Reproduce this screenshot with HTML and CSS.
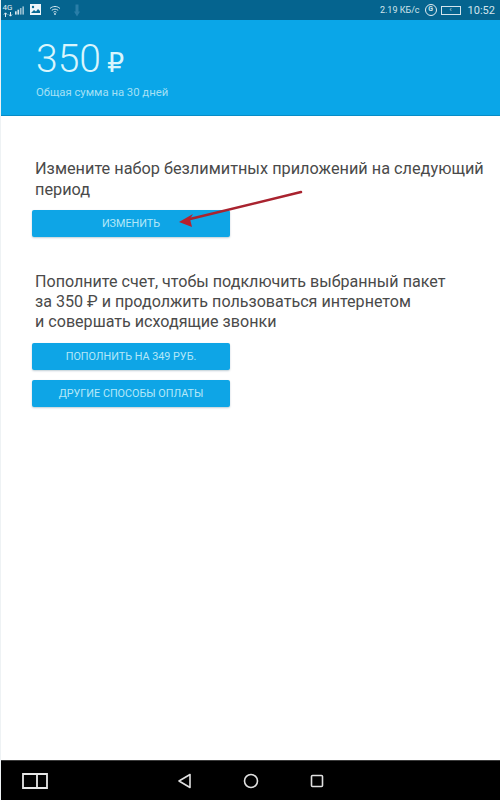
FILE: index.html
```html
<!DOCTYPE html>
<html lang="ru">
<head>
<meta charset="utf-8">
<title>Баланс</title>
<link rel="stylesheet" href="styles.css">
</head>
<body>
<div class="screen">
  <div class="status">
    <div class="status-left">
      <div class="net">
        <span class="net-label">4G</span>
        <svg class="net-arrows" viewBox="0 0 10 5"><path d="M2.500 5V1M1 2.500L2.500 .8 4 2.500M7.500 0v4M6 2.500L7.500 4.200 9 2.500" fill="none" stroke="#e3eef3" stroke-width="1"/></svg>
      </div>
      <svg class="ic-signal" viewBox="0 0 11 10"><rect x="0" y="6" width="2" height="4"/><rect x="3" y="4" width="2" height="6"/><rect x="6" y="2" width="2" height="8" opacity=".7"/><rect x="9" y="0" width="2" height="10" opacity=".7"/></svg>
      <svg class="ic-photo" viewBox="0 0 11 11"><rect width="11" height="11" fill="#eef6fa"/><circle cx="3" cy="3" r="1.2" fill="#0a6a94"/><path d="M1 9l3-3 2 1.500L8 5l2 2v2z" fill="#0a6a94"/></svg>
      <svg class="ic-wifi" viewBox="0 0 12 10"><path d="M1 3.500C4 .8 8 .8 11 3.500M2.800 5.400c2-1.700 4.400-1.700 6.400 0M4.500 7.200c1-.8 2-.8 3 0" fill="none" stroke="#d5e6ee" stroke-width="1"/><circle cx="6" cy="9" r=".9" fill="#d5e6ee"/></svg>
      <svg class="ic-down" viewBox="0 0 6 12"><path d="M1.500 0h3v7H6l-3 5-3-5h1.500z" fill="#2a7ea8"/></svg>
    </div>
    <div class="status-right">
      <span>2.19 КБ/с</span>
      <span class="ring">G</span>
      <span class="battery"><span class="bat-mark">‹</span></span>
      <span class="clock">10:52</span>
    </div>
  </div>

  <header class="head">
    <div class="sum">350<span class="rub">₽</span></div>
    <div class="sum-note">Общая сумма на 30 дней</div>
  </header>

  <main class="content">
    <section class="block block-first">
      <p class="msg">Измените набор безлимитных приложений на следующий период</p>
      <button class="btn">ИЗМЕНИТЬ</button>
    </section>
    <section class="block block-second">
      <p class="msg">Пополните счет, чтобы подключить выбранный пакет<br>за 350 ₽ и продолжить пользоваться интернетом<br>и совершать исходящие звонки</p>
      <div class="btns">
        <button class="btn">ПОПОЛНИТЬ НА 349 РУБ.</button>
        <button class="btn">ДРУГИЕ СПОСОБЫ ОПЛАТЫ</button>
      </div>
    </section>
    <svg class="arrow" viewBox="0 0 126 38"><path d="M123 2L12 29" stroke="#a9232f" stroke-width="2.500" fill="none" stroke-linecap="round"/><path d="M1 32L15 24L12 29L14 37z" fill="#b81f2d"/></svg>
  </main>

  <nav class="navbar">
    <svg class="nav-split" viewBox="0 0 26 16"><path d="M1 1h24v14H1zM15 1v14" fill="none" stroke="#e6e6e6" stroke-width="1.800"/></svg>
    <div class="nav-main">
      <svg class="nav-ic" viewBox="0 0 16 16"><path d="M13 1.500v13L2 8z" fill="none" stroke="#e0e0e0" stroke-width="1.600" stroke-linejoin="round"/></svg>
      <svg class="nav-ic" viewBox="0 0 16 16"><circle cx="8" cy="8" r="6.500" fill="none" stroke="#e0e0e0" stroke-width="1.600"/></svg>
      <svg class="nav-ic" viewBox="0 0 16 16"><rect x="2.500" y="2.500" width="11" height="11" rx="1" fill="none" stroke="#e0e0e0" stroke-width="1.600"/></svg>
    </div>
  </nav>
</div>
</body>
</html>
```
FILE: styles.css
```css
* { box-sizing: border-box; }
html, body { margin: 0; padding: 0; }
body { background: #fff; font-family: Roboto, "Liberation Sans", sans-serif; }
.screen { width: 500px; height: 800px; display: flex; flex-direction: column; overflow: hidden; background: #fff; border-left: 1px solid #eef2f4; }

.status { height: 20px; flex: none; background: #05648f; color: #d3e4ec; display: flex; justify-content: space-between; align-items: center; padding: 0 5px 0 1px; font-size: 9px; }
.status-left { display: flex; align-items: center; }
.net { width: 11px; display: flex; flex-direction: column; align-items: center; color: #e3eef3; }
.net-label { font-size: 8px; line-height: 8px; }
.net-arrows { width: 10px; height: 5px; display: block; }
.ic-signal { width: 9px; height: 9px; margin-left: 2px; fill: #d6e5ec; }
.ic-photo { width: 11px; height: 11px; margin-left: 6px; margin-bottom: 1px; }
.ic-wifi { width: 12px; height: 10px; margin-left: 8px; }
.ic-down { width: 6px; height: 13px; margin-left: 13px; }
.status-right { display: flex; align-items: center; }
.ring { width: 12px; height: 12px; border: 1.500px solid #e3eef3; border-radius: 50%; font-size: 7px; font-weight: 700; line-height: 9px; text-align: center; margin-left: 5px; }
.battery { width: 20px; height: 9px; border: 1px solid #d3e4ec; margin-left: 4px; font-size: 7px; line-height: 7px; text-align: center; }
.clock { font-size: 11px; margin-left: 7px; }

.head { height: 96px; flex: none; background: #0aa6e8; padding: 19px 0 0 35px; color: #cdf1fb; border-bottom: 1px solid #078cc6; }
.sum { font-size: 39px; line-height: 40px; font-weight: 300; display: flex; align-items: baseline; color: #d9f5fc; }
.rub { font-size: 27px; margin-left: 6px; font-weight: 400; font-family: "DejaVu Sans", sans-serif; }
.sum-note { font-size: 11.300px; line-height: 13px; margin-top: 3px; color: #a4e0f5; }

.content { flex: 1; position: relative; }
.block { padding: 0 31px; }
.block-first { padding-top: 43px; }
.block-second { padding-top: 35px; }
.msg { margin: 0 0 0 3px; font-size: 16.100px; line-height: 20.200px; color: #4a4a4a; width: 460px; }
.block-first .msg { font-size: 16.300px; line-height: 20.500px; }
.btn { display: block; width: 198px; height: 27px; border: 0; border-radius: 2px; background: #0ea5e6; color: #b5e8f8; font-family: Roboto, "Liberation Sans", sans-serif; font-size: 10.800px; padding: 0; box-shadow: 0 1px 2px rgba(0,60,90,.25); }
.block-first .btn { margin-top: 10px; }
.btns { display: flex; flex-direction: column; gap: 10px; margin-top: 10px; }
.arrow { position: absolute; left: 177px; top: 74px; width: 126px; height: 38px; }

.navbar { height: 40px; flex: none; background: #000; border-top: 1px solid #3c3c3c; display: flex; align-items: center; padding-left: 22px; margin-left: -1px; }
.nav-split { width: 26px; height: 16px; }
.nav-main { display: flex; gap: 50px; margin-left: 129px; }
.nav-ic { width: 16px; height: 16px; }
```
